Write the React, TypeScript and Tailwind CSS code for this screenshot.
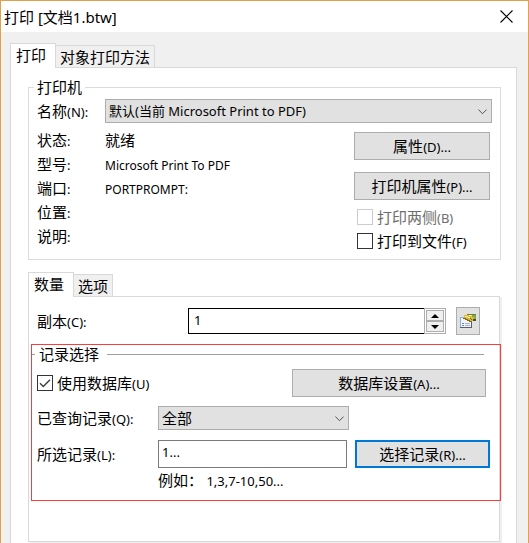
import { useState } from "react";
import type { ReactNode } from "react";

const info = [
  { label: "状态", value: "就绪" },
  { label: "型号", latin: "Microsoft Print To PDF" },
  { label: "端口", latin: "PORTPROMPT:" },
  { label: "位置" },
  { label: "说明" },
];

// Latin runs are set smaller than the Chinese text around them
function En({ small = false, children }: { small?: boolean; children: ReactNode }) {
  return (
    <span className={`font-['Noto_Sans',sans-serif] leading-none ${small ? "text-[12px]" : "text-[13px]"}`}>
      {children}
    </span>
  );
}

function Button({ className = "", children }: { className?: string; children: ReactNode }) {
  return (
    <button
      type="button"
      className={`flex h-7 items-center justify-center border border-[#adadad] bg-[#e1e1e1] leading-5 ${className}`}
    >
      <span>{children}</span>
    </button>
  );
}

function Select({ id, options, className = "" }: { id: string; options: string[]; className?: string }) {
  return (
    <div className={`relative min-w-0 ${className}`}>
      <select
        id={id}
        className="block h-6 w-full appearance-none border border-[#adadad] bg-[#e1e1e1] pl-[3px] pr-6 leading-5"
      >
        {options.map((option) => (
          <option key={option}>{option}</option>
        ))}
      </select>
      <svg
        width="9"
        height="6"
        viewBox="0 0 9 6"
        fill="none"
        stroke="#505050"
        className="pointer-events-none absolute right-[5px] top-[10px]"
      >
        <path d="M0.4 0.6L4.5 4.7L8.6 0.6" />
      </svg>
    </div>
  );
}

function Checkbox({
  checked = false,
  disabled = false,
  children,
}: {
  checked?: boolean;
  disabled?: boolean;
  children: ReactNode;
}) {
  return (
    <label className={`flex h-6 items-center gap-1 leading-5 ${disabled ? "text-[#6d6d6d]" : ""}`}>
      <span className="relative size-4">
        <input
          type="checkbox"
          defaultChecked={checked}
          disabled={disabled}
          className="peer block size-4 appearance-none border border-[#333333] bg-white disabled:border-[#cccccc]"
        />
        <svg
          width="16"
          height="16"
          viewBox="0 0 16 16"
          fill="none"
          stroke="#404040"
          strokeWidth="1.5"
          className="pointer-events-none absolute inset-0 hidden peer-checked:block"
        >
          <path d="M3 8.2L6.3 11.5L13 4.8" />
        </svg>
      </span>
      <span>{children}</span>
    </label>
  );
}

function PropertiesIcon() {
  return (
    <svg width="16" height="14" viewBox="0 0 16 14" shapeRendering="crispEdges">
      <path d="M0 3h12v11H0z" fill="#f1f5fb" />
      <path d="M0 3h4v1H1v9H0z" fill="#86b4e2" />
      <path d="M0 13h12v1H0zM11 7h1v6h-1z" fill="#5a5f68" />
      <path d="M2 9h2v1H2zM2 11h2v1H2z" fill="#6f87b8" />
      <path d="M5 9h5v1H5zM5 11h5v1H5z" fill="#a4afc6" />
      <path d="M4 1h3V0h9v7h-4v1H9V7H7V6H5V5H3V3h1z" fill="#d9bb3c" />
      <path d="M5 2h3v1H5zM9 1h3v1H9zM8 3h2v1H8z" fill="#f8ee9a" />
      <path d="M3 5h2v1h2v1h2v1h3V7h-2V6H8V5H6V4H3zM10 4h1v1h1v1h-1V5h-1z" fill="#85671b" />
      <path d="M12 0h4v5h-2V3h-2z" fill="#86a548" />
      <path d="M7 0h9v1H7z" fill="#67803a" />
      <path d="M13 5h3v2h-3z" fill="#3d4f4a" />
    </svg>
  );
}

export default function App() {
  const [copies, setCopies] = useState(1);

  return (
    <div className="flex min-h-screen flex-col border-x border-t border-[#e2a04a] bg-[#f0f0f0] font-['Noto_Sans_CJK_SC',sans-serif] text-[15px] text-black">
      <header className="flex h-[31px] items-center justify-between bg-white pl-[3px] pr-[15px]">
        <h1 className="font-['Noto_Sans','Noto_Sans_CJK_SC',sans-serif] leading-5">打印 [文档1.btw]</h1>
        <button type="button" aria-label="关闭">
          <svg width="13" height="13" viewBox="0 0 13 13" stroke="#000" strokeWidth="1.1">
            <path d="M0.5 0.5L12.5 12.5M12.5 0.5L0.5 12.5" />
          </svg>
        </button>
      </header>

      <main className="flex flex-1 flex-col pl-[9px] pr-[11px] pt-[11px]">
        <div className="relative z-10 -mb-px flex items-end">
          <button type="button" className="h-[25px] border border-b-0 border-[#d9d9d9] bg-white pb-[2px] pl-[5px] pr-[9px] leading-5">
            打印
          </button>
          <button type="button" className="h-[23px] border border-l-0 border-[#d9d9d9] px-1 leading-5">
            对象打印方法
          </button>
        </div>

        <div className="flex-1 border-x border-t border-[#d9d9d9] bg-white pb-px pl-[17px] pr-[15px] pt-[9px]">
          <fieldset className="border border-[#dcdcdc] pb-[6px] pl-2 pr-2">
            <legend className="-ml-[3px] px-[3px] leading-5">打印机</legend>
            <div className="mt-[2px] flex items-center">
              <label htmlFor="printer" className="w-[68px] leading-5">
                名称<En>(N):</En>
              </label>
              <Select
                id="printer"
                className="flex-1 font-['Noto_Sans','Noto_Sans_CJK_SC',sans-serif] text-[13px]"
                options={["默认(当前 Microsoft Print to PDF)"]}
              />
            </div>
            <div className="flex justify-between pr-[2px]">
              <dl className="mt-[5px]">
                {info.map((row) => (
                  <div key={row.label} className="flex h-6 items-center leading-5">
                    <dt className="w-[68px]">
                      {row.label}
                      <En>:</En>
                    </dt>
                    <dd>
                      {row.value}
                      {row.latin && <En small>{row.latin}</En>}
                    </dd>
                  </div>
                ))}
              </dl>
              <div className="mt-[9px] w-[136px]">
                <Button className="w-full">
                  属性<En>(D)...</En>
                </Button>
                <Button className="mt-3 w-full">
                  打印机属性<En>(P)...</En>
                </Button>
                <div className="mt-[5px] pl-[3px]">
                  <Checkbox disabled>
                    打印两侧<En>(B)</En>
                  </Checkbox>
                  <Checkbox>
                    打印到文件<En>(F)</En>
                  </Checkbox>
                </div>
              </div>
            </div>
          </fieldset>

          <div className="relative z-10 -mb-px mt-3 flex items-end">
            <button type="button" className="h-[25px] border border-b-0 border-[#d9d9d9] bg-white pb-[2px] pl-[5px] pr-[9px] leading-5">
              数量
            </button>
            <button type="button" className="h-[23px] border border-l-0 border-[#d9d9d9] bg-[#f0f0f0] px-1 leading-5">
              选项
            </button>
          </div>

          <div className="mr-px border border-[#d9d9d9] pb-10 pt-[10px] shadow-[2px_1px_0_#f0f0f0]">
            <div className="flex items-center pl-2 pr-[19px]">
              <label htmlFor="copies" className="w-[151px] leading-5">
                副本<En>(C):</En>
              </label>
              <input
                id="copies"
                value={copies}
                onChange={(e) => setCopies(Number(e.target.value) || 1)}
                className="h-[26px] min-w-0 flex-1 border border-r-0 border-black bg-white pb-[2px] pl-[5px] font-['Noto_Sans',sans-serif] text-[13px]"
              />
              <div className="flex h-[26px] w-[22px] flex-col border border-[#adadad] p-px">
                <button
                  type="button"
                  aria-label="增加"
                  onClick={() => setCopies(copies + 1)}
                  className="flex flex-1 items-center justify-center border border-[#adadad] bg-[#f0f0f0]"
                >
                  <svg width="8" height="4" viewBox="0 0 8 4">
                    <path d="M0 4L4 0L8 4z" />
                  </svg>
                </button>
                <button
                  type="button"
                  aria-label="减少"
                  onClick={() => setCopies(Math.max(1, copies - 1))}
                  className="flex flex-1 items-center justify-center border border-[#adadad] bg-[#f0f0f0]"
                >
                  <svg width="8" height="4" viewBox="0 0 8 4">
                    <path d="M0 0L4 4L8 0z" />
                  </svg>
                </button>
              </div>
              <Button className="ml-[10px] w-6 shrink-0">
                <PropertiesIcon />
              </Button>
            </div>

            <section className="-mr-[2px] ml-[2px] mt-[9px] border border-[#ff3b3b] pb-[10px] pl-[5px]">
              <div className="-ml-[5px] flex h-[18px] items-center pr-4">
                <span className="mr-1 h-px w-[3px] bg-[#a0a0a0]" />
                <h2 className="leading-[18px]">记录选择</h2>
                <span className="ml-2 h-px flex-1 bg-[#a0a0a0]" />
              </div>

              <div className="mt-[6px] flex items-center justify-between pr-[14px]">
                <Checkbox checked>
                  使用数据库<En>(U)</En>
                </Checkbox>
                <Button className="w-[194px]">
                  数据库设置<En>(A)...</En>
                </Button>
              </div>

              <div className="mt-[9px] flex items-center pr-[151px]">
                <label htmlFor="queried" className="w-[121px] leading-5">
                  已查询记录<En>(Q):</En>
                </label>
                <Select id="queried" className="flex-1" options={["全部"]} />
              </div>

              <div className="mt-[10px] flex items-center pr-[10px]">
                <label htmlFor="selected" className="w-[121px] leading-5">
                  所选记录<En>(L):</En>
                </label>
                <input
                  id="selected"
                  defaultValue="1..."
                  className="h-7 min-w-0 flex-1 border border-[#7a7a7a] bg-white pb-1 pl-[3px] font-['Noto_Sans',sans-serif] text-[13px]"
                />
                <button
                  type="button"
                  className="ml-2 h-7 w-[135px] border-2 border-[#0078d7] bg-[#e1e1e1] leading-5"
                >
                  选择记录<En>(R)...</En>
                </button>
              </div>

              <p className="mt-[2px] h-5 pl-[121px] leading-5">
                例如： <En>1,3,7-10,50...</En>
              </p>
            </section>
          </div>
        </div>
      </main>
    </div>
  );
}
